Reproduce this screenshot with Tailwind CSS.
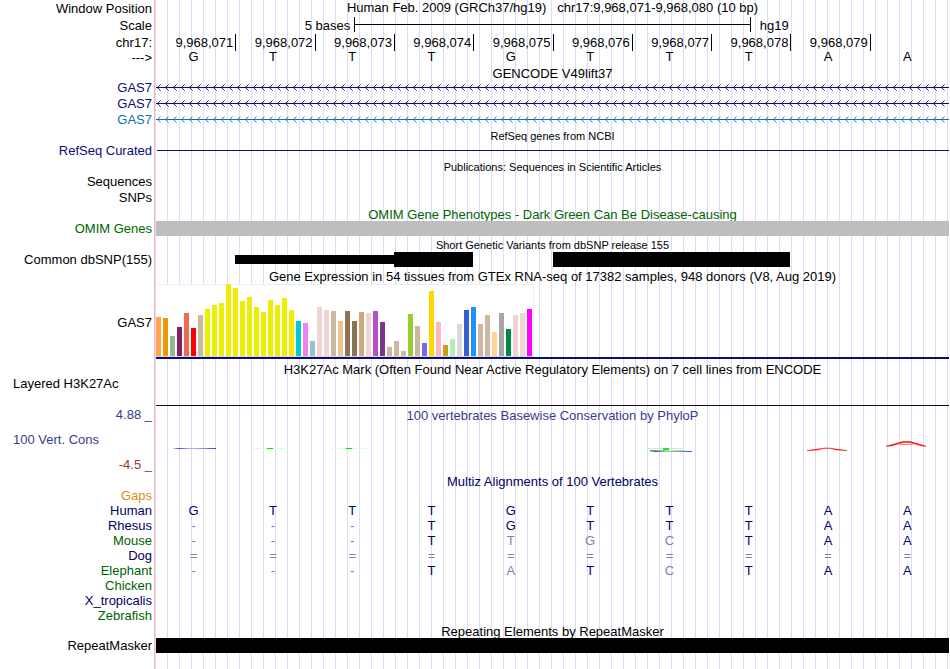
<!DOCTYPE html>
<html lang="en">
<head>
<meta charset="utf-8">
<title>chr17:9,968,071-9,968,080 hg19</title>
<script src="https://cdn.jsdelivr.net/npm/@tailwindcss/browser@4"></script>
</head>
<body class="bg-white">
<main class="min-h-screen overflow-hidden pr-px text-[13px] leading-[15px] text-black font-['Liberation_Sans',Arial,sans-serif] bg-[linear-gradient(to_right,#fff_154px,#ffb4b4_154px,#ffb4b4_155px,transparent_155px),repeating-linear-gradient(to_right,transparent_0px,transparent_11px,#dcdcf8_11px,#dcdcf8_12px)]">

  <header>
    <div class="grid grid-cols-[152px_1fr] gap-x-1 h-[17px] leading-[17px]">
      <div class="text-right">Window Position</div>
      <h1 class="text-center whitespace-pre leading-[15px]">Human Feb. 2009 (GRCh37/hg19)   chr17:9,968,071-9,968,080 (10 bp)</h1>
    </div>
    <div class="grid grid-cols-[152px_1fr] gap-x-1 h-[17px] leading-[17px]">
      <div class="text-right">Scale</div>
      <div class="grid grid-cols-[25%_50%_25%]">
        <div class="text-right pr-1">5 bases</div>
        <div class="flex items-center h-[15px] border-x border-black"><div class="h-px w-full bg-black"></div></div>
        <div class="pl-[9px]">hg19</div>
      </div>
    </div>
    <div class="grid grid-cols-[152px_1fr] gap-x-1 h-[15px] leading-[17px]">
      <div class="text-right">chr17:</div>
      <div class="grid grid-cols-10 text-right *:pr-0.5 *:border-black">
        <div>9,968,071</div><div class="border-l">9,968,072</div><div class="border-l">9,968,073</div><div class="border-l">9,968,074</div><div class="border-l">9,968,075</div><div class="border-l">9,968,076</div><div class="border-l">9,968,077</div><div class="border-l">9,968,078</div><div class="border-l">9,968,079</div><div class="border-l"></div>
      </div>
    </div>
    <div class="grid grid-cols-[152px_1fr] gap-x-1 h-[17px]">
      <div class="text-right leading-[17px]">---&gt;</div>
      <div class="grid grid-cols-10 text-center *:pr-1">
        <div>G</div><div>T</div><div>T</div><div>T</div><div>G</div><div>T</div><div>T</div><div>T</div><div>A</div><div>A</div>
      </div>
    </div>
  </header>

  <section>
    <h2 class="h-3.5 pl-[156px] text-center">GENCODE V49lift37</h2>
    <div class="grid grid-cols-[152px_1fr] gap-x-1 h-4 text-[#0c0c78]">
      <div class="text-right">GAS7</div>
      <div class="pt-1"><svg class="block w-full h-[7px]">
        <defs>
          <pattern id="strand" width="8" height="7" patternUnits="userSpaceOnUse">
            <path d="M0 3.5H8" stroke="#0c0c78" stroke-width="1"/>
            <path d="M4.5 .5L1.5 3.5L4.5 6.5" fill="none" stroke="#0c0c78" stroke-width=".9"/>
          </pattern>
        </defs>
        <rect width="100%" height="7" fill="url(#strand)"/></svg></div>
    </div>
    <div class="grid grid-cols-[152px_1fr] gap-x-1 h-4 text-[#0c0c78]">
      <div class="text-right">GAS7</div>
      <div class="pt-1"><svg class="block w-full h-[7px]"><rect width="100%" height="7" fill="url(#strand)"/></svg></div>
    </div>
    <div class="grid grid-cols-[152px_1fr] gap-x-1 h-4 text-[#0c70b4]">
      <div class="text-right">GAS7</div>
      <div class="pt-1"><svg class="block w-full h-[7px]">
        <defs>
          <pattern id="strandAlt" width="8" height="7" patternUnits="userSpaceOnUse">
            <path d="M0 3.5H8" stroke="#0c70b4" stroke-width="1"/>
            <path d="M4.5 .5L1.5 3.5L4.5 6.5" fill="none" stroke="#0c70b4" stroke-width=".9"/>
          </pattern>
        </defs>
        <rect width="100%" height="7" fill="url(#strandAlt)"/></svg></div>
    </div>
  </section>

  <section>
    <h2 class="h-[15px] pt-0.5 pl-[156px] text-center text-[11px] leading-[13px]">RefSeq genes from NCBI</h2>
    <div class="grid grid-cols-[152px_1fr] gap-x-1 h-[15px] items-center">
      <div class="text-right text-[#0c0c78]">RefSeq Curated</div>
      <div class="ml-px h-px bg-[#0c0c78]"></div>
    </div>
  </section>

  <section>
    <h2 class="h-4 pt-[3px] pl-[156px] text-center text-[11px] leading-[13px]">Publications: Sequences in Scientific Articles</h2>
    <div class="h-4 w-[152px] text-right">Sequences</div>
    <div class="h-[17px] w-[152px] text-right">SNPs</div>
  </section>

  <section class="text-[#006400]">
    <h2 class="h-3.5 overflow-hidden pl-[156px] text-center">OMIM Gene Phenotypes - Dark Green Can Be Disease-causing</h2>
    <div class="grid grid-cols-[152px_1fr] gap-x-1 h-[15px]">
      <div class="text-right">OMIM Genes</div>
      <div class="bg-[#bebebe]"></div>
    </div>
  </section>

  <section class="pt-[3px]">
    <h2 class="h-[13px] pl-[156px] text-center text-[11px] leading-[13px]">Short Genetic Variants from dbSNP release 155</h2>
    <div class="grid grid-cols-[152px_1fr] gap-x-1 h-[15px]">
      <div class="text-right">Common dbSNP(155)</div>
      <div class="grid grid-cols-10 items-center">
        <div class="col-start-2 col-span-2 h-[9px] bg-black"></div>
        <div class="col-start-4 h-[15px] bg-black"></div>
        <div class="col-start-6 col-span-3 h-[15px] bg-black"></div>
      </div>
    </div>
  </section>

  <section class="pt-0.5">
    <h2 class="h-[15px] pl-[156px] text-center">Gene Expression in 54 tissues from GTEx RNA-seq of 17382 samples, 948 donors (V8, Aug 2019)</h2>
    <div class="grid grid-cols-[152px_1fr] gap-x-1 h-[75px]">
      <div class="text-right self-center pt-0.5">GAS7</div>
      <div class="border-b-2 border-[#0c0c78]">
        <svg id="expression" class="block" width="378" height="73" role="img" aria-label="GAS7 expression by tissue">
          <rect width="378" height="73" fill="#fff"/>
          <path d="M0 .5H377.5V72" fill="none" stroke="#eee"/>
          <path d="M0 72.5H378" stroke="#d8d8d8"/>
        </svg>
      </div>
    </div>
  </section>

  <section class="pt-[3px]">
    <h2 class="h-3.5 pl-[156px] text-center">H3K27Ac Mark (Often Found Near Active Regulatory Elements) on 7 cell lines from ENCODE</h2>
    <div class="grid grid-cols-[152px_1fr] gap-x-1 h-[30px]">
      <div class="pl-[13px]">Layered H3K27Ac</div>
      <div class="border-b border-[#20081c]"></div>
    </div>
  </section>

  <section class="grid grid-cols-[152px_1fr] gap-x-1 h-[68px] text-[#3c3c8c]">
    <div class="flex flex-col gap-2.5 pt-px">
      <div class="text-right">4.88 _</div>
      <div class="pl-[13px]">100 Vert. Cons</div>
      <div class="text-right text-[#8c3c3c]">-4.5 _</div>
    </div>
    <div class="pt-0.5">
      <h2 class="h-3.5 text-center">100 vertebrates Basewise Conservation by PhyloP</h2>
      <svg class="block w-full h-[52px]" viewBox="0 0 793 52" preserveAspectRatio="none" role="img" aria-label="PhyloP conservation">
        <defs>
          <linearGradient id="fadeBlue"><stop offset="0" stop-color="#8c8cff" stop-opacity=".4"/><stop offset=".12" stop-color="#3c3cff"/><stop offset=".4" stop-color="#b4b4ff"/><stop offset=".7" stop-color="#8c8cff"/><stop offset="1" stop-color="#3c3cf0"/></linearGradient>
          <linearGradient id="fadeOlive"><stop offset="0" stop-color="#8c8c14"/><stop offset=".5" stop-color="#f0dcb4"/><stop offset=".8" stop-color="#c8c878"/><stop offset="1" stop-color="#fff" stop-opacity="0"/></linearGradient>
        </defs>
        <rect x="17" y="26" width="43" height="1" fill="url(#fadeBlue)"/>
        <rect x="95" y="26" width="37" height="1" fill="#dcffdc"/><rect x="111" y="26" width="6" height="1" fill="#00e600"/>
        <rect x="175" y="26" width="37" height="1" fill="#dcffdc"/><rect x="190" y="26" width="6" height="1" fill="#00e600"/>
        <rect x="491" y="26" width="37" height="1" fill="#b4ffb4"/><rect x="494" y="28" width="40" height="1" fill="url(#fadeOlive)"/><rect x="494" y="29" width="42" height="1" fill="url(#fadeBlue)"/><rect x="507" y="26" width="6" height="2" fill="#00ff00"/>
        <path d="M651 28.6L661 28L668 26.3H674L681 28L691 28.6L681 27.2L674 26.2H668L661 27.2Z" fill="#f00" stroke="#f00" stroke-width=".5"/>
        <path d="M730 24.2L735 24L747 20.6H754L766 24L770 24.2L762 21.8L754 19.4H747L739 21.8Z" fill="#f00" stroke="#f00" stroke-width=".5"/>
        <path d="M744 22.5H757" stroke="#f66" stroke-width=".8"/>
      </svg>
    </div>
  </section>

  <section class="text-[#000064]">
    <h2 class="h-3.5 pl-[156px] text-center">Multiz Alignments of 100 Vertebrates</h2>
    <table class="w-full table-fixed text-center">
      <colgroup><col class="w-[156px]"><col span="10"></colgroup>
      <tbody id="alignment"></tbody>
    </table>
  </section>

  <section class="pt-px">
    <h2 class="h-3.5 overflow-hidden pl-[156px] text-center">Repeating Elements by RepeatMasker</h2>
    <div class="grid grid-cols-[152px_1fr] gap-x-1 h-[15px]">
      <div class="text-right">RepeatMasker</div>
      <div class="bg-black"></div>
    </div>
  </section>
</main>

<script>
  const tissues = [[39,'#FFA54F'],[38,'#EE9A00'],[20,'#8FBC8F'],[29,'#8B1C62'],[43,'#EE6A50'],[28,'#FF0000'],[41,'#CDB79E'],
    ...[47,51,53,72,68,55,59,49,44,56,51,58,46].map(h => [h,'#EEEE00']),
    [35,'#00CDCD'],[33,'#EE82EE'],[15,'#9AC0CD'],[49,'#EED5D2'],[46,'#EED5D2'],[45,'#CDB79E'],[35,'#EEC591'],[45,'#8B7355'],[35,'#8B7355'],
    [44,'#CDAA7D'],[43,'#EED5D2'],[45,'#B452CD'],[34,'#7A378B'],[9,'#CDB79E'],[15,'#CDB79E'],[5,'#CDB79E'],[42,'#9ACD32'],[30,'#CDB79E'],
    [13,'#7A67EE'],[65,'#FFD700'],[34,'#FFB6C1'],[11,'#CD9B1D'],[17,'#B4EEB4'],[32,'#D9D9D9'],[46,'#3A5FCD'],[49,'#1E90FF'],[32,'#CDB79E'],
    [41,'#CDB79E'],[24,'#FFD39B'],[43,'#A6A6A6'],[27,'#008B45'],[41,'#EED5D2'],[43,'#EED5D2'],[47,'#FF00FF']];
  const chart = document.getElementById('expression');
  tissues.forEach(([h, fill], i) => {
    const bar = document.createElementNS('http://www.w3.org/2000/svg', 'rect');
    for (const [k, v] of Object.entries({ x: i * 7, y: 72 - h, width: 5, height: h, fill })) bar.setAttribute(k, v);
    chart.append(bar);
  });

  // Lower case marks a base that differs from the human sequence.
  const orange = 'text-[#e08c14]', navy = 'text-[#000064]', green = 'text-[#006400]';
  const species = [['Gaps', orange, ''],['Human', navy, 'GTTTGTTTAA'],['Rhesus', navy, '---TGTTTAA'],['Mouse', green, '---TtgcTAA'],
    ['Dog', navy, '=========='],['Elephant', green, '---TaTcTAA'],['Chicken', green, ''],['X_tropicalis', navy, ''],['Zebrafish', green, '']];
  document.getElementById('alignment').innerHTML = species.map(([name, color, bases]) =>
    `<tr class="h-[15px]"><th scope="row" class="p-0 pr-1 text-right font-normal ${color}">${name}</th>` +
    bases.padEnd(10).split('').map(b =>
      `<td class="p-0 pr-1 ${/[A-Z]/.test(b) ? 'text-[#000064]' : 'text-[#8080b4]'}">${b.toUpperCase()}</td>`).join('') + '</tr>').join('');
</script>
</body>
</html>
